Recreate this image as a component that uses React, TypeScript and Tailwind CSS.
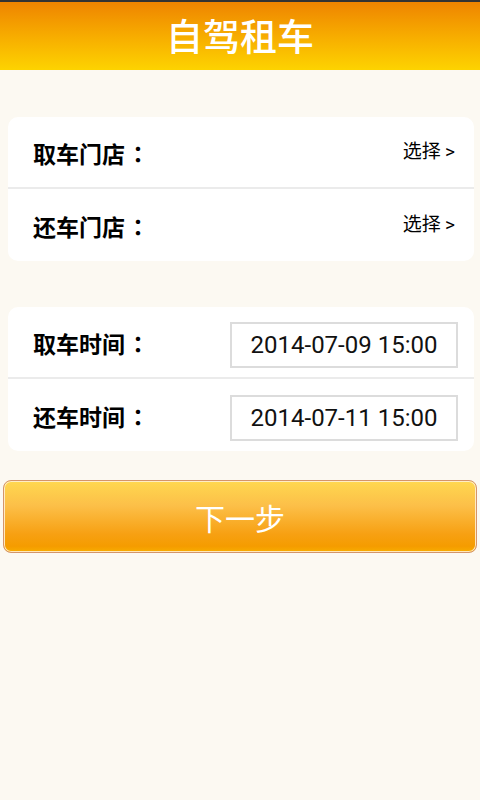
import React from "react";

function Row({ label, children, divider }: { label: string; children: React.ReactNode; divider?: boolean }) {
  return (
    <div className={`flex h-[72px] items-center justify-between pl-[25px] ${divider ? "border-b-2 border-[#ebebeb]" : ""}`}>
      <span className="flex mt-[3px] text-[23px] font-bold text-black leading-none font-['Noto_Sans_CJK_SC',sans-serif]">
        {label}
        <span className="inline-block w-[26px] text-center font-['Noto_Sans_CJK_TC',sans-serif]">：</span>
      </span>
      {children}
    </div>
  );
}

function Pick() {
  return (
    <span className="pr-[19px] mt-[-4px] text-[19px] text-black leading-none font-['Noto_Sans_CJK_SC',sans-serif]">
      选择 <span className="font-['Roboto',sans-serif]">&gt;</span>
    </span>
  );
}

function DateBox({ text }: { text: string }) {
  return (
    <div className="mr-4 mt-[5px] w-[228px] h-[46px] border-2 border-[#dcdcdc] flex items-center justify-center">
      <span className="text-[24px] text-[#111] leading-none font-['Roboto',sans-serif]">{text}</span>
    </div>
  );
}

export default function App() {
  return (
    <div className="w-[480px] h-[800px] bg-[#fcf9f2] flex flex-col">
      <div className="h-[70px] border-t-2 border-[#333333] bg-gradient-to-b from-[#ee8400] to-[#fdd300] flex items-center justify-center">
        <span className="mt-[-2px] text-[37px] text-white leading-none font-medium font-['Noto_Sans_CJK_SC',sans-serif]">自驾租车</span>
      </div>

      <div className="ml-2 mr-[6px] mt-[47px] bg-white rounded-[10px]">
        <Row label="取车门店" divider>
          <Pick />
        </Row>
        <Row label="还车门店">
          <Pick />
        </Row>
      </div>

      <div className="ml-2 mr-[6px] mt-[46px] bg-white rounded-[10px]">
        <Row label="取车时间" divider>
          <DateBox text="2014-07-09 15:00" />
        </Row>
        <Row label="还车时间">
          <DateBox text="2014-07-11 15:00" />
        </Row>
      </div>

      <div className="mx-[3px] mt-[29px] h-[73px] rounded-[8px] border border-[#d4956a] shadow-[inset_0_0_0_1px_rgba(255,240,210,0.9)] bg-[linear-gradient(to_bottom,#ffd850_0%,#fcbf48_35%,#f7a012_75%,#f59c00_92%,#f8ad00_100%)] flex items-center justify-center">
        <span className="text-[30px] text-white leading-none font-['Noto_Sans_CJK_SC',sans-serif]">下一步</span>
      </div>
    </div>
  );
}
